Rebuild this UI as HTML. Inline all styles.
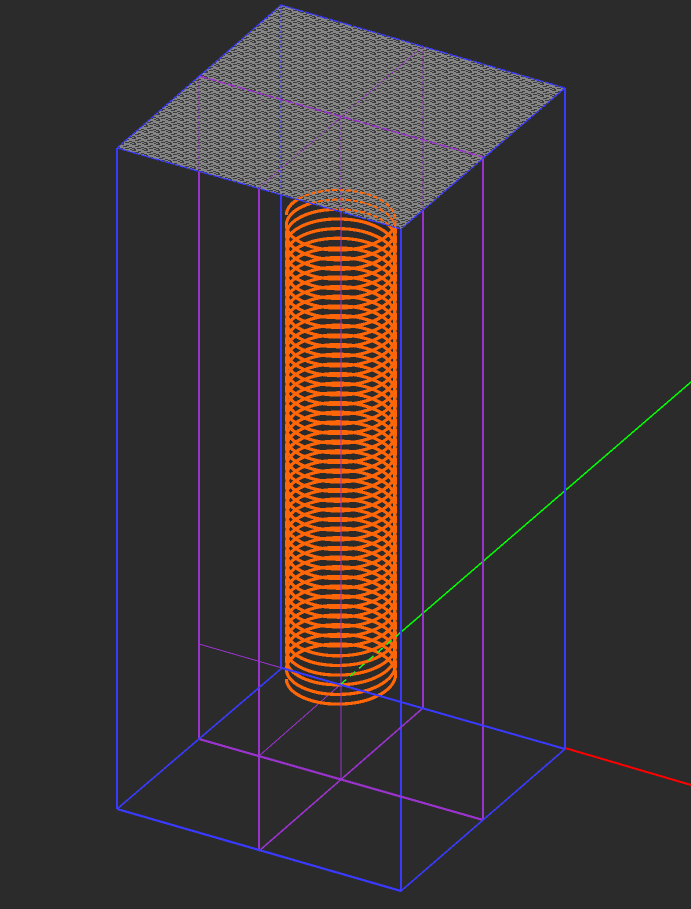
<!DOCTYPE html>
<html><head><meta charset="utf-8"><style>
html,body{margin:0;padding:0;background:#2b2b2b;width:691px;height:909px;overflow:hidden}
svg{display:block}
</style></head><body>
<svg width="691" height="909" viewBox="0 0 691 909" xmlns="http://www.w3.org/2000/svg" fill="none">
<defs>
<path id="t" d="M-54.6 0C-54.6 -14.44 -30.2 -25.985 0 -25.185C30.2 -24.385 54.6 -11.21 54.6 4.83C54.6 20.87 30.2 34.045 0 34.845C-30.2 35.645 -54.6 24.1 -54.6 9.66"/>
<g id="g2"><use href="#t"/><use href="#t" y="9.66"/></g>
<g id="g4"><use href="#g2"/><use href="#g2" y="19.32"/></g>
<g id="g8"><use href="#g4"/><use href="#g4" y="38.64"/></g>
<g id="g16"><use href="#g8"/><use href="#g8" y="77.28"/></g>
<g id="helix" transform="translate(341,215.2)"><use href="#g16"/><use href="#g16" y="154.56"/><use href="#g16" y="309.12"/></g>
<pattern id="mesh" width="12" height="6" patternUnits="userSpaceOnUse">
<rect width="12" height="6" fill="#858585"/>
<g fill="#3d3d3d">
<rect x="0" y="0" width="4" height="1"/><rect x="6" y="1" width="3" height="1"/>
<rect x="3" y="2" width="4" height="1"/><rect x="9" y="3" width="3" height="1"/>
<rect x="0" y="4" width="3" height="1"/><rect x="5" y="4" width="4" height="1"/>
<rect x="10" y="5" width="2" height="1"/><rect x="2" y="5" width="2" height="1"/>
</g>
</pattern>
<clipPath id="plateClip"><polygon points="117,148 281,5 565,88 401,229"/></clipPath>
</defs>

<rect width="691" height="909" fill="#2b2b2b"/>

<g shape-rendering="crispEdges">
<!-- axes -->
<line x1="565" y1="748" x2="691" y2="785" stroke="#ff0000" stroke-width="2"/>
<line x1="400" y1="633" x2="691" y2="382" stroke="#00ff00" stroke-width="1.5"/>

<!-- purple verticals -->
<g stroke="#9933cc" stroke-width="2">
<line x1="199" y1="76" x2="199" y2="739"/>
<line x1="259" y1="188" x2="259" y2="851"/>
<line x1="423" y1="46" x2="423" y2="708"/>
<line x1="483" y1="157" x2="483" y2="820"/>
</g>
<!-- blue verticals -->
<g stroke="#3a3aff" stroke-width="2">
<line x1="117" y1="148" x2="117" y2="809"/>
<line x1="281" y1="5" x2="281" y2="668"/>
<line x1="401" y1="229" x2="401" y2="891"/>
<line x1="565" y1="88" x2="565" y2="749"/>
</g>

<!-- bottom purple -->
<line x1="199" y1="739" x2="483" y2="820" stroke="#9933cc" stroke-width="2.2"/>
<line x1="259" y1="851" x2="423" y2="708" stroke="#9933cc" stroke-width="1.6"/>
<line x1="199" y1="644" x2="282" y2="668" stroke="#9933cc" stroke-width="1"/>
<line x1="259" y1="756" x2="341" y2="684" stroke="#9933cc" stroke-width="1"/>

<!-- bottom blue -->
<g stroke="#3a3aff">
<line x1="117" y1="809" x2="401" y2="891" stroke-width="2.2"/>
<line x1="117" y1="809" x2="282" y2="668" stroke-width="1.6"/>
<line x1="401" y1="891" x2="565" y2="749" stroke-width="1.6"/>
</g>

<!-- helix -->
<use href="#helix" stroke="#ff6608" stroke-width="3.2"/>

<!-- lines over helix -->
<line x1="341" y1="117" x2="341" y2="779" stroke="#9933cc" stroke-width="1"/>
<line x1="282" y1="668" x2="565" y2="749" stroke="#3a3aff" stroke-width="2"/>
<line x1="341" y1="684" x2="400" y2="633" stroke="#22ee22" stroke-width="1.5" stroke-dasharray="7 5"/>

<!-- plate -->
<polygon points="117,148 281,5 565,88 401,229" fill="url(#mesh)"/>

<!-- helix through plate -->
<g clip-path="url(#plateClip)">
<use href="#helix" stroke="#ff6608" stroke-width="2" stroke-dasharray="5 2"/>
</g>

<!-- lines through plate -->
<g stroke="#3a3aff" stroke-width="1" stroke-dasharray="3 2">
<line x1="281" y1="5" x2="281" y2="188"/>
</g>
<g stroke="#9933cc" stroke-width="1" stroke-dasharray="3 2">
<line x1="199" y1="76" x2="199" y2="171"/>
<line x1="423" y1="46" x2="423" y2="210"/>
<line x1="341" y1="117" x2="341" y2="212"/>
<line x1="259" y1="188" x2="423" y2="46"/>
</g>
<line x1="199" y1="76" x2="483" y2="157" stroke="#9933cc" stroke-width="1.6" stroke-dasharray="8 2"/>

<!-- plate edges -->
<g stroke="#3a3aff" stroke-width="1.4" stroke-dasharray="4 1">
<line x1="117" y1="148" x2="281" y2="5"/>
<line x1="281" y1="5" x2="565" y2="88"/>
<line x1="565" y1="88" x2="401" y2="229"/>
<line x1="117" y1="148" x2="401" y2="229"/>
</g>
</g>
</svg>
</body></html>
